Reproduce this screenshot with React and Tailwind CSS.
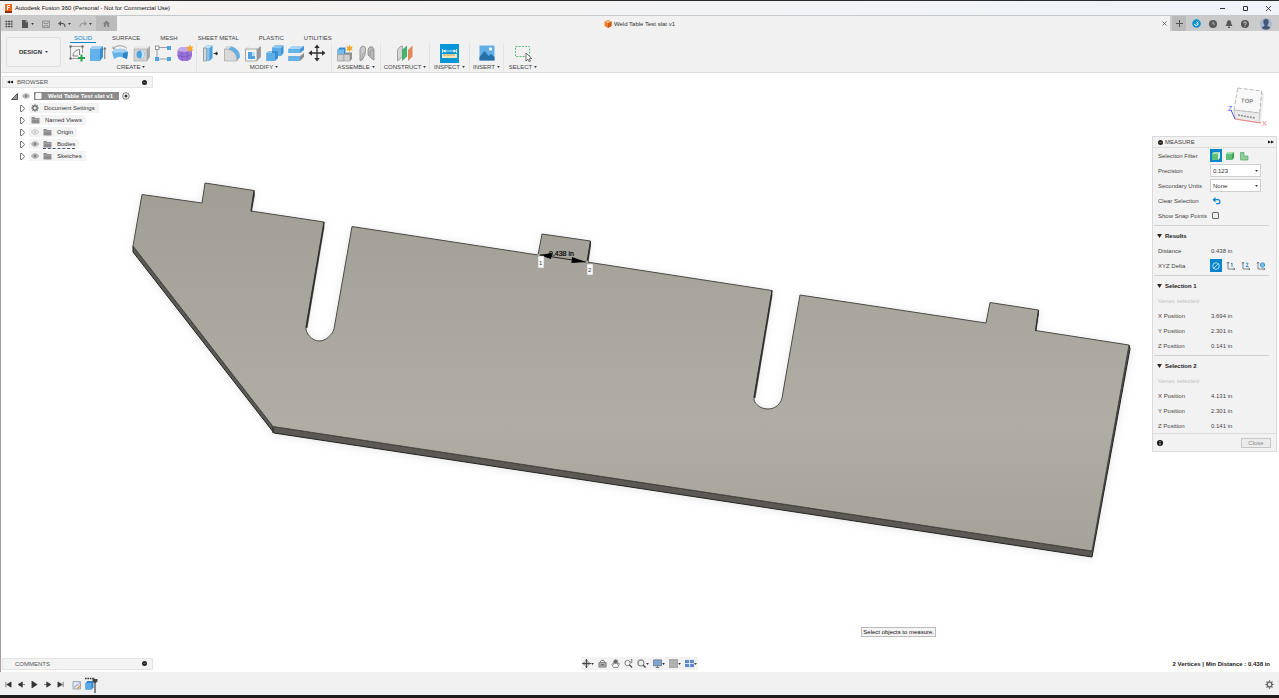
import { useState } from 'react';

const TABS = ['SOLID', 'SURFACE', 'MESH', 'SHEET METAL', 'PLASTIC', 'UTILITIES'];

const Svg = ({ w = 'w-[18px] h-[18px]', box = '0 0 18 18', children }) => (
  <svg viewBox={box} className={`${w} shrink-0`} fill="none" aria-hidden="true">{children}</svg>
);

const Caret = () => (
  <svg viewBox="0 0 4 3" className="w-[3px] h-[2px] shrink-0" aria-hidden="true"><path d="M0 0h4L2 3z" fill="#333"/></svg>
);

// ---------- ribbon icons ----------
const SketchIcon = () => (
  <Svg>
    <path d="M3 2.500h12M3 14.500h7M2.500 3v11M14.500 3v6" stroke="#8b8b8b" strokeWidth=".8"/>
    <path d="M5 12C5 8 8 6 11.500 5.500V11M5 12h5" stroke="#666" strokeWidth=".8"/>
    {[[2,2],[14,2],[2,14]].map(([x,y])=><rect key={`${x}-${y}`} x={x-0.5} y={y-0.5} width="2" height="2" fill="#555"/>)}
    <path d="M13.500 10.500v7M10 14h7" stroke="#26a54a" strokeWidth="2"/>
  </Svg>
);
const ExtrudeIcon = () => (
  <Svg>
    <path d="M1 5l3-3h10v11l-3 4H1z" fill="#3b8fd0"/>
    <path d="M1 5l3-3h10l-3 3z" fill="#a5d2f3"/>
    <path d="M1 5h10v12H1z" fill="#62b1ea"/>
    <path d="M15.800 4v11M14.700 5.500l1.100-2 1.100 2" stroke="#555" strokeWidth=".8"/>
  </Svg>
);
const RevolveIcon = () => (
  <Svg>
    <path d="M1 8C3 3.500 15 3.500 17 8l-1 7-4-1.500c-2-1-4-1-6 0L3 15z" fill="#62b1ea"/>
    <path d="M1 8C3 3.500 15 3.500 17 8c-2.500-1-4-.5-5.500 1-2-1-5-1-7 0z" fill="#a5d2f3"/>
    <path d="M12 13.500V9.500L17 8l-1 7z" fill="#2f83c5"/>
    <path d="M2 4.500C6 .8 12 .8 16 4.500M2 2.500v2.200h2.200" stroke="#777" strokeWidth=".7"/>
  </Svg>
);
const HoleIcon = () => (
  <Svg>
    <path d="M1 5l3-3h13v11l-3 4H1z" fill="#a8a8a8"/>
    <path d="M1 5l3-3h13l-3 3z" fill="#e9e9e9"/>
    <path d="M1 5h13v12H1z" fill="#d2d2d2" stroke="#999" strokeWidth=".5"/>
    <circle cx="7.500" cy="10.500" r="4" fill="#4da3df"/>
    <path d="M7.500 6.500a4 4 0 0 1 0 8c2-2 2-6 0-8z" fill="#c9e5f8"/>
  </Svg>
);
const PatternIcon = () => (
  <Svg>
    <path d="M4 3.500h10M4 15h10M3 4v10" stroke="#8a8a8a" strokeWidth=".8"/>
    <rect x="1.500" y="2" width="3.500" height="3.500" fill="#f4f4f4" stroke="#777" strokeWidth=".7"/>
    <rect x="13" y="2" width="4" height="4" fill="#4fa4e0"/>
    <rect x="1" y="13" width="4" height="4" fill="#4fa4e0"/>
    <rect x="13" y="13" width="4" height="4" fill="#4fa4e0"/>
  </Svg>
);
const FormIcon = () => (
  <Svg>
    <path d="M1.500 7c1-4 5-4 8-4 5 0 6.500 2 6.500 6 0 5-1 8-7 8-7 0-8-3-7.500-10z" fill="#9a72d8"/>
    <path d="M2 6.500C3 3 6 3 9.500 3c3 0 5 1 6 3-4 2-9 2.500-13.500.5z" fill="#c3a8ee"/>
    <path d="M1.500 11.500c4 1.500 10 1.500 14.500-1M11 8c.5 3 .5 6 0 9M6 8c0 3 0 6 .5 9" stroke="#7750bb" strokeWidth=".7"/>
    <path d="M14 .5l1 2.300 2.500-.3-1.500 2 1.500 2-2.500-.3-1 2.300-1-2.300-2.500.3 1.500-2-1.500-2 2.500.3z" fill="#f5a623"/>
  </Svg>
);
const PressPullIcon = () => (
  <Svg>
    <path d="M1.500 4l3-2.500h6V14l-3 3h-6z" fill="#4b9ddb"/>
    <path d="M1.500 4l3-2.500h6L7.500 4z" fill="#c8e4f8"/>
    <path d="M1.500 4h3v13h-3z" fill="#d8d8d8" stroke="#8b8b8b" strokeWidth=".7"/>
    <path d="M4.800 4h2.700v13H4.800z" fill="#86c4f0"/>
    <path d="M11.500 9.500H16M14 8l2 1.500L14 11z" stroke="#333" strokeWidth=".9" fill="#333"/>
  </Svg>
);
const FilletIcon = () => (
  <Svg>
    <path d="M1.500 5l3-3C12 2 17 6 17 13l-3 4H1.500z" fill="#9c9c9c"/>
    <path d="M1.500 5l3-3C12 2 17 6 17 13l-3 3C14 9 9 5 1.500 5z" fill="#dadada"/>
    <path d="M5 5.300L8.500 2.500C13 4 16.500 7 17 13l-3 3C13.500 10 10 6.500 5 5.300z" fill="#5fb0ea"/>
    <path d="M1.500 5C9 5 14 9 14 17H1.500z" fill="#d9d9d9" stroke="#999" strokeWidth=".5"/>
  </Svg>
);
const ShellIcon = () => (
  <Svg>
    <path d="M1.500 5l4-3H17v11l-4 4H1.500z" fill="#9b9b9b"/>
    <path d="M1.500 5l4-3H17l-4 3z" fill="#efefef"/>
    <path d="M1.500 5H13v12H1.500z" fill="#f4f4f4" stroke="#8a8a8a" strokeWidth=".7"/>
    <path d="M4 8h4v4h3v3H4z" fill="#4fa4e0"/>
    <path d="M8 8h3v4H8z" fill="#bcdff7"/>
  </Svg>
);
const CombineIcon = () => (
  <Svg>
    <path d="M6 4l3-2.500h8.500V9L15 12H6z" fill="#3d92d3"/>
    <path d="M6 4l3-2.500h8.500L15 4z" fill="#8cc6f0"/>
    <path d="M6 4h9v8H6z" fill="#5cade7"/>
    <path d="M.5 9L3 7h9v7l-3 3H.5z" fill="#3a8dce"/>
    <path d="M.5 9L3 7h3v2z" fill="#8cc6f0"/>
    <path d="M.5 9H9v8H.5z" fill="#5cade7"/>
  </Svg>
);
const SplitIcon = () => (
  <Svg>
    <path d="M1.500 5l4-3H17v4l-4 3H1.500z" fill="#3f95d6"/>
    <path d="M1.500 5l4-3H17l-4 3z" fill="#a9d5f5"/>
    <path d="M1.500 5H13v4H1.500z" fill="#64b2ea"/>
    <path d="M1.500 9.800H13L17 7v1.500l-3 3H1.500z" fill="#ededed"/>
    <path d="M1.500 12H13l4-3v4l-4 4H1.500z" fill="#8c8c8c"/>
    <path d="M1.500 12H13v5H1.500z" fill="#64b2ea"/>
  </Svg>
);
const MoveIcon = () => (
  <Svg>
    <path d="M9 2v14M2 9h14" stroke="#2f2f2f" strokeWidth="1.300"/>
    <path d="M9 .5l2.700 3.500H6.300zM9 17.500l2.700-3.500H6.300zM.5 9L4 6.300v5.400zM17.500 9L14 6.300v5.400z" fill="#2f2f2f"/>
  </Svg>
);
const ComponentIcon = () => (
  <Svg>
    <path d="M1.500 6l2-2.500h6V10H1.500z" fill="#3a8dce"/>
    <path d="M1.500 5.500H8V11H1.500z" fill="#74baec"/>
    <path d="M1.500 10.500H8V17H1.500z" fill="#d0d0d0" stroke="#8c8c8c" strokeWidth=".6"/>
    <path d="M8 10.500l2-2h6V15l-2 2H8z" fill="#8f8f8f"/>
    <path d="M8 10.500h6V17H8z" fill="#d0d0d0" stroke="#8c8c8c" strokeWidth=".5"/>
    <path d="M13.500.5l.9 2.300 2.500-.4-1.500 2 1.500 2-2.500-.4-.9 2.300-.9-2.300-2.500.4 1.500-2-1.500-2 2.500.4z" fill="#f2a51f"/>
  </Svg>
);
const JointIcon = () => (
  <Svg>
    <path d="M2 6c0-5 6-5 5.500-.5L7 11l-3 5-2 .5z" fill="#c9c9c9" stroke="#777" strokeWidth=".7"/>
    <path d="M4 16c0-4 0-6 3-8" stroke="#888" strokeWidth=".7"/>
    <path d="M10 7c0-6 6-5 6-1v10l-3-2-3-3z" fill="#b9b9b9" stroke="#777" strokeWidth=".7"/>
    <path d="M12 12c0-5 1-6 3-6" stroke="#888" strokeWidth=".7"/>
  </Svg>
);
const PlaneIcon = () => (
  <Svg>
    <path d="M1.500 6.500C2 4 4 2.500 6.500 2v10.500l-5 4.500z" fill="#d5d5d5" stroke="#888" strokeWidth=".7"/>
    <path d="M6 6l5-4.500v11L6 17z" fill="#45b36b"/>
    <path d="M12 6l4.500-4.500v11L12 17z" fill="#e08a5b"/>
  </Svg>
);
const MeasureIcon = () => (
  <span className="flex w-[19px] h-[19px] bg-[#0696d7]">
    <Svg w="w-full h-full" box="0 0 19 19">
      <path d="M3 7h13M2.500 5v4M16.500 5v4" stroke="#fff" strokeWidth=".8"/>
      <path d="M3 7l2.500-1.500v3zM16 7l-2.500-1.500v3z" fill="#fff"/>
      <path d="M2 10h15v4H2z" fill="#f4e7b5"/>
      <path d="M4 10v2M6 10v2M8 10v2M10 10v2M12 10v2M14 10v2" stroke="#8d7a3a" strokeWidth=".6"/>
    </Svg>
  </span>
);
const PictureIcon = () => (
  <Svg>
    <path d="M1.500 1.500h15v15h-15z" fill="#62aee6"/>
    <path d="M1.500 13l5-6 4 5 2.500-2 3.500 3v3.500h-15z" fill="#276fa9"/>
    <circle cx="12.500" cy="5" r="1.700" fill="#f3f9fe"/>
  </Svg>
);
const SelectIcon = () => (
  <Svg>
    <path d="M1.500 2.500h14v10h-14z" stroke="#58b070" strokeWidth=".9" strokeDasharray="2 1.200"/>
    <path d="M12 9v8l2-1.800 1.200 2.500 1.200-.6-1.100-2.400 2.500-.2z" fill="#fff" stroke="#333" strokeWidth=".7"/>
  </Svg>
);

const GROUPS = [
  { label:'CREATE', cls:'w-[131px]', icons:[SketchIcon, ExtrudeIcon, RevolveIcon, HoleIcon, PatternIcon, FormIcon] },
  { label:'MODIFY', cls:'w-[135px] px-[3px]', icons:[PressPullIcon, FilletIcon, ShellIcon, CombineIcon, SplitIcon, MoveIcon] },
  { label:'ASSEMBLE', cls:'w-[49px] px-[2px]', icons:[ComponentIcon, JointIcon] },
  { label:'CONSTRUCT', cls:'w-[49px]', icons:[PlaneIcon] },
  { label:'INSPECT', cls:'w-[40px]', icons:[MeasureIcon] },
  { label:'INSERT', cls:'w-[34px]', icons:[PictureIcon] },
  { label:'SELECT', cls:'w-[38px]', icons:[SelectIcon] },
];

// ---------- small shared icons ----------
const Gear = ({ w = 'w-[8px] h-[8px]' }) => (
  <Svg w={w} box="0 0 16 16">
    <circle cx="8" cy="8" r="4.200" stroke="#666" strokeWidth="2.400"/>
    <path d="M8 .5v3M8 12.500v3M.5 8h3M12.500 8h3M2.700 2.700l2 2M11.300 11.300l2 2M13.300 2.700l-2 2M4.700 11.300l-2 2" stroke="#666" strokeWidth="2.200"/>
  </Svg>
);
const Folder = () => (
  <Svg w="w-[9px] h-[8px]" box="0 0 18 16">
    <path d="M1 2h6l1.500 2H17v11H1z" fill="#8d8d8d"/>
    <path d="M1 6.500h16" stroke="#c9c9c9"/>
  </Svg>
);
const Eye = ({ off }) => (
  <Svg w="w-[8px] h-[6px]" box="0 0 16 12">
    <path d="M1 6c3-6 11-6 14 0-3 6-11 6-14 0z" fill={off ? '#eee' : '#c4c4c4'} stroke={off ? '#b5b5b5' : '#959595'} strokeWidth="1.400"/>
    <circle cx="8" cy="6" r="2.600" fill={off ? '#ccc' : '#7d7d7d'}/>
  </Svg>
);
const Dot = () => (
  <Svg w="w-[5px] h-[5px]" box="0 0 10 10">
    <circle cx="5" cy="5" r="5" fill="#222"/><path d="M2.500 5h5" stroke="#aaa"/>
  </Svg>
);
const Back = ({ flip }) => (
  <Svg w="w-[6px] h-[4px]" box="0 0 12 8">
    <path d={flip ? 'M0 1l6 3-6 3zM6 1l6 3-6 3z' : 'M6 1L0 4l6 3zM12 1L6 4l6 3z'} fill="#111"/>
  </Svg>
);

function TitleBar() {
  return (
    <header className="flex items-center justify-between h-[16px] pl-[5px] pr-[7px] bg-gradient-to-r from-[#f7f3f0] to-[#eef3f9] border-t border-t-[#2a2a2a] border-b border-b-[#c3c8cc]">
      <div className="flex items-center gap-[3px]">
        <Svg w="w-[7px] h-[9px]" box="0 0 14 18">
          <path d="M0 0h14v18H0z" fill="#ee6a1b"/><path d="M0 14h14v4H0z" fill="#8c2f0d"/>
          <path d="M5 12V3h5M5 7h4" stroke="#fff" strokeWidth="2"/>
        </Svg>
        <h1 className="text-[6px] leading-[8px] text-[#111]">Autodesk Fusion 360 (Personal - Not for Commercial Use)</h1>
      </div>
      <div className="flex items-center gap-[16px]">
        <button aria-label="Minimize"><Svg w="w-[7px] h-[7px]" box="0 0 7 7"><path d="M1 3.500h5" stroke="#333"/></Svg></button>
        <button aria-label="Maximize"><Svg w="w-[7px] h-[7px]" box="0 0 7 7"><path d="M1.500 1.500h4v4h-4z" stroke="#333"/></Svg></button>
        <button aria-label="Close window"><Svg w="w-[7px] h-[7px]" box="0 0 7 7"><path d="M1 1l5 5M6 1L1 6" stroke="#333" strokeWidth=".9"/></Svg></button>
      </div>
    </header>
  );
}

function DocumentBar() {
  return (
    <div className="flex items-stretch justify-between h-[15px]">
      <div className="flex items-center bg-[#cbcbcb] pl-[4px] gap-[8px]">
        <button aria-label="Data panel"><Svg w="w-[8px] h-[8px]" box="0 0 8 8"><path d="M.5 1.500h7M.5 4h7M.5 6.500h7" stroke="#444" strokeWidth="1.600" strokeDasharray="1.800 .8"/></Svg></button>
        <button aria-label="File" className="flex items-center gap-[2px]">
          <Svg w="w-[8px] h-[8px]" box="0 0 8 8"><path d="M1 0h4l2 2v6H1z" fill="#555"/><path d="M5 0v2h2" stroke="#ccc" strokeWidth=".6"/></Svg><Caret/>
        </button>
        <button aria-label="Save"><Svg w="w-[8px] h-[8px]" box="0 0 8 8"><path d="M.5 1h7v6.500h-7zM2 1v2.500h4V1M2 7.500V5.500h4v2" stroke="#888" strokeWidth=".8"/></Svg></button>
        <button aria-label="Undo" className="flex items-center gap-[2px]">
          <Svg w="w-[8px] h-[8px]" box="0 0 8 8"><path d="M3 1L0 3.500 3 6z" fill="#555"/><path d="M2 3.500c3-.5 5 0 5 3.500" stroke="#555" strokeWidth="1.200"/></Svg><Caret/>
        </button>
        <button aria-label="Redo" className="flex items-center gap-[2px]">
          <Svg w="w-[8px] h-[8px]" box="0 0 8 8"><path d="M5 1l3 2.500L5 6z" fill="#999"/><path d="M6 3.500c-3-.5-5 0-5 3.500" stroke="#999" strokeWidth="1.200"/></Svg><Caret/>
        </button>
        <button aria-label="Home" className="flex items-center justify-center w-[21px] h-full -ml-[4px] bg-[#bababa]">
          <Svg w="w-[7px] h-[7px]" box="0 0 8 8"><path d="M4 .5L0 4h1v4h2V5h2v3h2V4h1z" fill="#808080"/></Svg>
        </button>
      </div>
      <div className="flex flex-1 items-center justify-end">
        <div className="flex flex-1 items-center justify-center gap-[2px]">
          <Svg w="w-[8px] h-[8px]" box="0 0 16 16"><path d="M8 0l7 3v9l-7 4-7-4V3z" fill="#ef7d2b"/><path d="M1 3l7-3 7 3-7 4z" fill="#fbb277"/><path d="M8 7l7-4v9l-7 4z" fill="#cc5b12"/></Svg>
          <span className="text-[6px] leading-[8px] text-[#333]">Weld Table Test slat v1</span>
        </div>
        <button aria-label="Close tab" className="mr-[3px]"><Svg w="w-[5px] h-[5px]" box="0 0 5 5"><path d="M.5 .5l4 4M4.500 .5l-4 4" stroke="#555" strokeWidth=".8"/></Svg></button>
      </div>
      <div className="flex items-center bg-[#cbcbcb] pl-[2px] pr-[7px] gap-[8px]">
        <button aria-label="New tab" className="flex items-center justify-center w-[14px] h-full bg-[#bababa] -mr-[2px]">
          <Svg w="w-[7px] h-[7px]" box="0 0 7 7"><path d="M3.500 0v7M0 3.500h7" stroke="#555"/></Svg>
        </button>
        <button aria-label="Extensions"><Svg w="w-[9px] h-[9px]" box="0 0 18 18"><circle cx="9" cy="9" r="8.500" fill="#0a91d4"/><path d="M5 10a3.500 3.500 0 1 0 4-4M9 9l4-4" stroke="#fff" strokeWidth="2"/></Svg></button>
        <button aria-label="Job status"><Svg w="w-[8px] h-[8px]" box="0 0 16 16"><circle cx="8" cy="8" r="8" fill="#5a5a5a"/><path d="M8 3.500V8h4" stroke="#ccc" strokeWidth="1.600"/></Svg></button>
        <button aria-label="Notifications"><Svg w="w-[8px] h-[8px]" box="0 0 16 16"><path d="M8 0c4 1 4.500 4 4.500 7L15 12H1l2.500-5c0-3 .5-6 4.500-7zM6 13h4v3H6z" fill="#5a5a5a"/></Svg></button>
        <button aria-label="Help"><Svg w="w-[8px] h-[8px]" box="0 0 16 16"><circle cx="8" cy="8" r="8" fill="#555"/><path d="M5.500 6.500c0-4 5-3.500 5-.5 0 2-2.500 2-2.500 4M8 11.500v2" stroke="#eee" strokeWidth="1.700"/></Svg></button>
        <button aria-label="Account" className="ml-[3px]"><Svg w="w-[12px] h-[12px]" box="0 0 24 24"><circle cx="12" cy="12" r="12" fill="#a9b9cf"/><path d="M12 2c5 0 6 4 5 8-.5 2-1.500 3-2 4v2c3 1 5 2 5.500 4-5 4.500-12 4.500-17 0 .5-2 2.500-3 5.500-4v-2c-1-1-1.500-2-2-4-1-4 0-8 5-8z" fill="#44587a"/></Svg></button>
      </div>
    </div>
  );
}

function Ribbon() {
  const [active, setActive] = useState('SOLID');
  return (
    <div className="flex h-[42px] pl-[5px] border-b border-[#dcdcdc]">
      <button className="flex items-center justify-center gap-[3px] w-[55px] h-[30px] mt-[6px] mr-[5px] border border-[#dedede] rounded-[2px] bg-[#f3f3f3] text-[6px] leading-[8px] font-bold text-[#333]">
        DESIGN <Caret/>
      </button>
      <div className="flex flex-col">
        <nav className="flex h-[12px] pl-[4px] gap-[12px]">
          {TABS.map(t=>(
            <button key={t} onClick={()=>setActive(t)}
              className={`px-[4px] pt-[2px] text-[6px] leading-[8px] border-b whitespace-nowrap ${active===t?'border-[#0a84cc] text-[#0a84cc]':'border-transparent text-[#444]'}`}>
              {t}
            </button>
          ))}
        </nav>
        <div className="flex h-[28px]">
          {GROUPS.map(g=>(
            <div key={g.label} className={`flex flex-col items-stretch border-r border-[#e2e2e2] last:border-r-0 ${g.cls}`}>
              <div className="flex items-center justify-around h-[20px]">
                {g.icons.map((Icon, i)=>(
                  <button key={i} aria-label={`${g.label} tool ${i+1}`}><Icon/></button>
                ))}
              </div>
              <button className="flex items-center justify-center gap-[2px] text-[6px] leading-[8px] text-[#444]">{g.label} <Caret/></button>
            </div>
          ))}
        </div>
      </div>
    </div>
  );
}

const TREE = [
  { label:'Document Settings', icon:'gear' },
  { label:'Named Views', icon:'folder' },
  { label:'Origin', icon:'folder', eye:'off' },
  { label:'Bodies', icon:'folder', eye:'on', marked:true },
  { label:'Sketches', icon:'folder', eye:'on' },
];

function Browser() {
  return (
    <aside className="w-[151px]">
      <div className="flex items-center h-[12px] px-[4px] gap-[4px] bg-[#f3f3f3] border border-[#e3e3e3] text-[6px] leading-[8px] text-[#555]">
        <button aria-label="Collapse browser"><Back/></button>
        <span className="flex-1">BROWSER</span>
        <button aria-label="Browser options" className="mr-[1px]"><Dot/></button>
      </div>
      <div className="flex items-center h-[12px] mt-[2px] pl-[9px] gap-[4px]">
        <Svg w="w-[7px] h-[7px]" box="0 0 7 7"><path d="M6.500 .5v6h-6z" fill="#999" stroke="#333" strokeWidth=".8"/></Svg>
        <Eye/>
        <div className="flex items-center h-[8px] gap-[5px] pr-[6px] bg-[#8c8c8c] text-[6px] leading-[8px] font-bold text-white">
          <Svg w="w-[9px] h-[8px]" box="0 0 9 8"><path d="M1 2l1.500-1.500H8V6L6.500 7.500H1z" fill="#f6f6f6" stroke="#777" strokeWidth=".7"/></Svg>
          Weld Table Test slat v1
        </div>
        <Svg w="w-[8px] h-[8px] -ml-[1px]" box="0 0 8 8"><circle cx="4" cy="4" r="3.300" stroke="#555" strokeWidth=".8"/><circle cx="4" cy="4" r="1.500" fill="#333"/></Svg>
      </div>
      <ul>
        {TREE.map(n=>(
          <li key={n.label} className="flex items-center h-[12px] pl-[18px] gap-[4px]">
            <Svg w="w-[5px] h-[7px]" box="0 0 5 7"><path d="M.5 .5h1.500L4.500 3.500 2 6.500H.5z" fill="#fff" stroke="#555" strokeWidth=".8"/></Svg>
            <div className="flex items-center h-[10px] pl-[2px] pr-[4px] gap-[4px] bg-[#f3f3f3] text-[6px] leading-[8px] text-[#333]">
              {n.eye && <Eye off={n.eye==='off'}/>}
              <span className={`flex items-center gap-[5px] ${n.marked?'border-b border-dashed border-[#4a5578]':''}`}>
                {n.icon==='gear' ? <Gear/> : <Folder/>}
                <span>{n.label}</span>
              </span>
            </div>
          </li>
        ))}
      </ul>
    </aside>
  );
}

function ViewCube() {
  return (
    <svg viewBox="0 0 42 44" className="w-[42px] h-[44px]" aria-label="View cube">
      <path d="M9 38l25 3 3-30-2.500-2-2.500 31z" fill="#ececec"/>
      <path d="M10.700 5l24 3-2 22L7 27z" fill="#f8f8f8" stroke="#a5a5a5" strokeWidth=".8" strokeDasharray="4 2"/>
      <path d="M7 27l25.700 3L32 39.700 8 36z" fill="#ebebeb" stroke="#a9a9a9" strokeWidth=".6"/>
      <path d="M11 32l17 3" stroke="#8f8f8f" strokeWidth="1.500" strokeDasharray="2 1"/>
      <path d="M8 36L4 27" stroke="#5050dd" strokeWidth="1"/>
      <path d="M8 36l26 4" stroke="#ee8a84" strokeWidth="1"/>
      <text x="14" y="20" fontSize="6" fontWeight="bold" fill="#888" transform="rotate(5 20 18)">TOP</text>
      <text x="1" y="28" fontSize="7" fill="#5050dd">Z</text>
      <text x="35" y="43" fontSize="7" fill="#ee7a74">X</text>
    </svg>
  );
}

const Field = ({ label, id, children }) => (
  <div className="flex items-center h-[15px] px-[5px]">
    {id ? <label htmlFor={id} className="w-[52px] shrink-0">{label}</label> : <span className="w-[52px] shrink-0">{label}</span>}
    {children}
  </div>
);
const Section = ({ title, children }) => (
  <section>
    <div className="h-[5px] flex items-center pl-px pr-[7px]"><hr className="w-full border-t border-[#d2d2d2]"/></div>
    <h3 className="flex items-center gap-[3px] h-[15px] px-[4px] font-bold text-[#222]">
      <svg viewBox="0 0 6 5" className="w-[5px] h-[4px]" aria-hidden="true"><path d="M0 0h6L3 5z" fill="#222"/></svg>{title}
    </h3>
    {children}
  </section>
);
const Pick = ({ id, options }) => (
  <div className="relative w-[51px]">
    <select id={id} className="block w-full h-[13px] pl-[2px] appearance-none border border-[#cfcfcf] bg-white text-[6px] leading-[8px] text-[#333]">
      {options.map(o=><option key={o}>{o}</option>)}
    </select>
    <span className="absolute right-[3px] top-0 h-full flex items-center pointer-events-none"><Caret/></span>
  </div>
);

const FilterIcon = ({ kind }) => (
  <Svg w="w-[10px] h-[10px]" box="0 0 10 10">
    {kind==='part' ? (
      <path d="M1.500 1.500h3.500v3.500H9v4H1.500z" fill="#8fcf9a" stroke="#5aa568" strokeWidth=".7"/>
    ) : (
      <>
        <path d="M1 3l2-2h6v6L7 9H1z" fill={kind==='face'?'#d8efe0':'#3f9d54'}/>
        <path d="M1 3h6v6H1z" fill="#5fc179"/><path d="M1 3l2-2h6L7 3z" fill="#a5dfb2"/>
      </>
    )}
  </Svg>
);
const DeltaIcon = ({ n }) => (
  <Svg w="w-[10px] h-[10px]" box="0 0 10 10">
    {n===0 ? <><circle cx="5" cy="5" r="3.300" stroke="#bfe3f6" strokeWidth=".9"/><path d="M2.800 7.200l4.400-4.400" stroke="#bfe3f6" strokeWidth=".9"/></> : (
      <>
        <path d="M2 1.500V8h6.500M1 2.500l1-1.500 1 1.500M7.500 7l1.500 1-1.500 1" stroke="#555" strokeWidth=".7"/>
        {n===1 && <path d="M5 3l1-1v4" stroke="#1688cc" strokeWidth=".9"/>}
        {n===2 && <path d="M5 2.500c2-1.500 3 0 0 3h2.500" stroke="#1688cc" strokeWidth=".9"/>}
        {n===3 && <><circle cx="6.500" cy="4" r="2.200" fill="#9fd2ef" stroke="#1688cc" strokeWidth=".8"/><path d="M4.500 4h4" stroke="#1688cc" strokeWidth=".6"/></>}
      </>
    )}
  </Svg>
);

const SELECTIONS = [
  { title:'Selection 1', pos:[['X Position','3.694 in'],['Y Position','2.301 in'],['Z Position','0.141 in']] },
  { title:'Selection 2', pos:[['X Position','4.131 in'],['Y Position','2.301 in'],['Z Position','0.141 in']] },
];

function MeasurePanel() {
  const [filter, setFilter] = useState('face');
  const [delta, setDelta] = useState(0);
  return (
    <aside className="w-[125px] bg-[#f2f2f2] border border-[#dadada] text-[6px] leading-[8px] text-[#444]">
      <div className="flex items-center h-[11px] px-[5px] gap-[2px] border-b border-[#dcdcdc]">
        <Dot/>
        <h2 className="flex-1">MEASURE</h2>
        <button aria-label="Collapse panel" className="-mr-[3px]"><Back flip/></button>
      </div>
      <Field label="Selection Filter">
        <div className="flex gap-[2px]">
          {['face','body','part'].map(k=>(
            <button key={k} aria-label={`Filter ${k}`} onClick={()=>setFilter(k)}
              className={`flex items-center justify-center w-[12px] h-[13px] ${filter===k?'bg-[#0a84cc]':''}`}>
              <FilterIcon kind={k}/>
            </button>
          ))}
        </div>
      </Field>
      <Field label="Precision" id="precision"><Pick id="precision" options={['0.123','0.12','0.1']}/></Field>
      <Field label="Secondary Units" id="units"><Pick id="units" options={['None','Millimeter','Inch']}/></Field>
      <Field label="Clear Selection">
        <button aria-label="Clear selection" className="ml-[2px]">
          <Svg w="w-[9px] h-[8px]" box="0 0 9 8"><path d="M3.500 0L.5 2.700l3 2.700z" fill="#0a84cc"/><path d="M2.500 2.700H6c2.500 0 2.500 4 0 4H4" stroke="#0a84cc" strokeWidth="1.200"/></Svg>
        </button>
      </Field>
      <Field label="Show Snap Points" id="snap">
        <input id="snap" type="checkbox" className="appearance-none ml-[2px] w-[7px] h-[7px] rounded-[1px] border border-[#666] bg-[#eee] checked:bg-[#0a84cc]"/>
      </Field>

      <Section title="Results">
        <Field label="Distance"><span className="pl-[1px]">0.438 in</span></Field>
        <Field label="XYZ Delta">
          <div className="flex gap-[3px]">
            {[0,1,2,3].map(n=>(
              <button key={n} aria-label={`Delta mode ${n}`} onClick={()=>setDelta(n)}
                className={`flex items-center justify-center w-[12px] h-[13px] ${delta===n?'bg-[#0a84cc]':''}`}>
                <DeltaIcon n={n}/>
              </button>
            ))}
          </div>
        </Field>
      </Section>

      {SELECTIONS.map(s=>(
        <Section key={s.title} title={s.title}>
          <p className="flex items-center h-[15px] px-[5px] text-[#c2c2c2]">Vertex selected</p>
          {s.pos.map(([k,v])=><Field key={k} label={k}><span className="pl-[1px]">{v}</span></Field>)}
        </Section>
      ))}

      <div className="flex items-center justify-between h-[18px] pl-[4px] pr-[5px] border-t border-[#dcdcdc]">
        <Svg w="w-[6px] h-[6px]" box="0 0 12 12"><circle cx="6" cy="6" r="6" fill="#111"/><path d="M6 2v2M6 5v5" stroke="#fff" strokeWidth="1.600"/></Svg>
        <button className="w-[30px] h-[10px] border border-[#c6c6c6] bg-[#ececec] text-[6px] leading-[8px] text-[#888]">Close</button>
      </div>
    </aside>
  );
}

// the slat body with its dimension, in drawing units of the 1278 x 599 view
const FACE = 'M142 121.500L202 130 205 110 254 117.500 251 138 324 149 306 254C305 260 312 268 319 268S332 262 334 256L352 153.500 538 182 542 161 590.500 168 587 189 772 217.500 754 324C753 330 760 336 768 336S781 330 782 325L800 222 986 250 990 229.500 1038.500 237 1035.500 257.500 1129 272 1092 478 273 353.500 133 173Z';

function Model() {
  return (
    <svg viewBox="1 0 1278 599" className="absolute inset-0 w-full h-full" aria-label="Slat model">
      <defs>
        <linearGradient id="steel" x1="0" y1="0" x2="0" y2="1">
          <stop offset="0" stopColor="#a09e95"/>
          <stop offset=".65" stopColor="#b0ada4"/>
          <stop offset="1" stopColor="#a5a299"/>
        </linearGradient>
        <filter id="soft" x="-5%" y="-5%" width="110%" height="110%">
          <feDropShadow dx="0" dy="1" stdDeviation="4" floodColor="#000" floodOpacity=".1"/>
        </filter>
      </defs>
      <g filter="url(#soft)">
        <path d="M133 173L133 179 274 360 1092 484 1130 276 1129 272 1092 478 273 353.500Z" fill="#5b5952" stroke="#222" strokeWidth="1" strokeLinejoin="round"/>
        <path d={FACE} fill="url(#steel)" stroke="#4a4944" strokeWidth="1" strokeLinejoin="round"/>
      </g>
      <path d="M324 149v5L307 255l-1-1zM772 217.500v5L755 325l-1-1zM254 117.500l.5 4-3 17-.5-.5zM590.500 168v5L588 189.500l-1-.5zM1038.500 237v4l-2.500 17-.5-.5z" fill="#2c2b28" stroke="#2c2b28" strokeWidth=".7"/>
      <path d="M273 354v6" stroke="#222"/>
      <path d="M540 182l46 7" stroke="#000" strokeWidth=".8"/>
      <path d="M539 182l13-2-1 6zM586 189l-14-5-.5 6z" fill="#000"/>
      <text x="549" y="183" fontSize="7" fill="#000" stroke="#000" strokeWidth=".2">0.438 in</text>
      <path d="M538 183h6v12h-6zM587 191h6v11h-6z" fill="#fafafa" stroke="#aaa" strokeWidth=".5"/>
      <circle cx="538" cy="182" r="1.200" fill="#ddd" stroke="#666" strokeWidth=".6"/>
      <circle cx="587" cy="189" r="1.200" fill="#ddd" stroke="#666" strokeWidth=".6"/>
      <text x="539" y="192" fontSize="6" fill="#333">1</text>
      <text x="588" y="199" fontSize="6" fill="#333">2</text>
    </svg>
  );
}

const NAV = [
  { name:'Orbit', menu:true, art:<><path d="M5 0v10M0 5h10" stroke="#444" strokeWidth="1.200"/><ellipse cx="5" cy="5" rx="4" ry="1.800" stroke="#666" strokeWidth=".8"/><path d="M5 0l1.500 2h-3zM5 10l1.500-2h-3z" fill="#444"/></> },
  { name:'Look at', art:<><path d="M1 4h8v5H1z" fill="#b5b5b5" stroke="#555" strokeWidth=".7"/><path d="M2.500 4l1-2.500h3l1 2.500" stroke="#555" strokeWidth=".8"/><path d="M3 6.500h4" stroke="#444"/></> },
  { name:'Pan', art:<path d="M3 9.500L.8 6l.7-.8L3 6V2.200h1V5 1h1v4V1h1v4l.3-3.500h1L7.300 6 8.500 4.500l.8.5L7.500 9.500z" fill="#f4f4f4" stroke="#555" strokeWidth=".7"/> },
  { name:'Zoom', art:<><circle cx="4" cy="4.500" r="3" stroke="#555" strokeWidth=".8"/><path d="M6 6.500l3 3" stroke="#444" strokeWidth="1.400"/><path d="M8.500 0v4M7.500 1l1-1 1 1M7.500 3l1 1 1-1" stroke="#444" strokeWidth=".6"/></> },
  { name:'Fit', menu:true, art:<><rect x=".5" y=".5" width="7" height="7" rx="2" stroke="#999" strokeWidth=".6"/><circle cx="4.500" cy="4.500" r="3.300" fill="#eee" stroke="#555" strokeWidth=".8"/><path d="M7 7l2.500 2.500" stroke="#444" strokeWidth="1.500"/></> },
  { name:'Display', menu:true, art:<><path d="M.5 1h9v6.500h-9z" fill="#7ea3d4" stroke="#5c6a80" strokeWidth=".8"/><path d="M3 9.500h4M5 7.500v2" stroke="#666"/></> },
  { name:'Grid', menu:true, art:<><path d="M.5 .5h9v9h-9z" fill="#a9a9a9" stroke="#888" strokeWidth=".6"/><path d="M3.500 .5v9M6.500 .5v9M.5 3.500h9M.5 6.500h9" stroke="#c3c3c3" strokeWidth=".5"/></> },
  { name:'Viewports', menu:true, art:<><path d="M0 1h10v8H0z" fill="#5e88c8"/><path d="M5 1v8M0 5h10" stroke="#e3ecf8"/></> },
];

function Timeline() {
  const steps = [
    ['Start','M1 1v6M7 1L2 4l5 3z'], ['Step back','M5 1L0 4l5 3zM5 4h3'], ['Play','M1 0l6 4-6 4z'],
    ['Step forward','M3 1l5 3-5 3zM3 4H0'], ['End','M1 1l5 3-5 3zM7 1v6'],
  ];
  return (
    <footer className="flex items-center justify-between h-[23px] px-[5px] bg-[#f0f0f0] pt-[2px]">
      <div className="flex items-center gap-[4px]">
        {steps.map(([n,d])=>(
          <button key={n} aria-label={n} className="w-[8px] h-[10px] mr-[1px] flex items-center"><Svg w="w-[7px] h-[7px]" box="0 0 8 8"><path d={d} fill="#333" stroke="#333" strokeWidth=".7"/></Svg></button>
        ))}
        <button aria-label="Sketch feature" className="ml-[2px]">
          <Svg w="w-[10px] h-[10px]" box="0 0 10 10"><path d="M1 1.500h7.500V9H1z" fill="#dfe6ee" stroke="#7a8fab" strokeWidth=".7"/><path d="M2.500 7.500c1-3 3-1 5-5" stroke="#7a6fc0" strokeWidth=".7"/><path d="M5 9l4-4" stroke="#e29a4a" strokeWidth="1.300"/></Svg>
        </button>
        <button aria-label="Extrude feature" className="-ml-[1px]">
          <Svg w="w-[14px] h-[16px]" box="0 0 14 16">
            <path d="M0 1.500h10" stroke="#333" strokeWidth="1.600" strokeDasharray="1.600 .8"/>
            <path d="M.5 6L2.500 4h6v6.500l-2 2h-6z" fill="#3384c8"/><path d="M.5 6h6v6.500h-6z" fill="#5aaae5"/>
            <path d="M7.500 2h5v2.500L10.700 6H9.300L7.500 4.500z" fill="#444"/><path d="M10 4v12" stroke="#444" strokeWidth="1.200"/>
          </Svg>
        </button>
      </div>
      <button aria-label="Timeline settings"><Gear w="w-[9px] h-[9px]"/></button>
    </footer>
  );
}

export default function App() {
  return (
    <div className="flex flex-col h-screen bg-[#f1f1f1] font-['Liberation_Sans',Arial,sans-serif] overflow-hidden">
      <TitleBar/>
      <div className="border-l border-[#9d9d9d]">
        <DocumentBar/>
        <Ribbon/>
      </div>

      <main className="relative flex flex-col justify-between flex-1 min-h-0 bg-white border-l border-[#9d9d9d]">
        <Model/>
        <div className="relative flex items-start justify-between pl-px pt-[3px] pr-[2px]">
          <Browser/>
          <div className="flex flex-col items-end">
            <div className="mt-[7px] mb-[9px] mr-[8px]"><ViewCube/></div>
            <MeasurePanel/>
          </div>
        </div>

        <div role="tooltip" className="absolute right-[343px] bottom-[35px] px-[1px] border border-[#bbb] bg-[#f4f4f4] text-[6px] leading-[8px] text-[#111]">Select objects to measure.</div>

        <div className="relative grid grid-cols-3 items-center px-px pb-[2px]">
          <div className="flex items-center justify-between w-[151px] h-[12px] pl-[12px] pr-[5px] bg-[#f3f3f3] border border-[#e3e3e3] text-[6px] leading-[8px] text-[#555]">
            <span>COMMENTS</span>
            <button aria-label="Comment options"><Dot/></button>
          </div>
          <div className="flex items-center justify-self-center h-[13px] px-[1px] gap-[4px] bg-[#f2f2f2]">
            {NAV.map(n=>(
              <button key={n.name} aria-label={n.name} className="flex items-center">
                <Svg w="w-[9px] h-[9px]" box="0 0 10 10">{n.art}</Svg>
                {n.menu && <Caret/>}
              </button>
            ))}
          </div>
          <p className="justify-self-end pr-[8px] text-[6px] leading-[8px] font-bold text-[#222]">2 Vertices | Min Distance : 0.438 in</p>
        </div>
      </main>

      <Timeline/>
      <div className="h-[3px] bg-[#211b18]"/>
    </div>
  );
}
